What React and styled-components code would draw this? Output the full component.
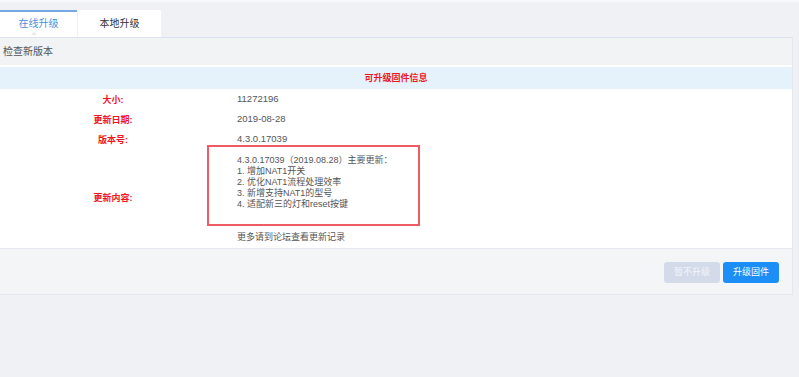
import styled, { createGlobalStyle } from "styled-components";

const GlobalStyle = createGlobalStyle`
  html, body {
    margin: 0;
    padding: 0;
    background: #eff1f4;
    font-family: "Liberation Sans", "Noto Sans CJK SC", sans-serif;
  }
  body {
    border-top: 2px solid #f7f8f9;
  }
`;

const info = [
  { label: "大小:", value: "11272196" },
  { label: "更新日期:", value: "2019-08-28" },
  { label: "版本号:", value: "4.3.0.17039" },
];

const notes = [
  "4.3.0.17039（2019.08.28）主要更新：",
  "1. 增加NAT1开关",
  "2. 优化NAT1流程处理效率",
  "3. 新增支持NAT1的型号",
  "4. 适配新三的灯和reset按键",
];

function App() {
  return (
    <>
      <GlobalStyle />
      <Page>
        <TabBar>
          <Tab active>在线升级</Tab>
          <Tab>本地升级</Tab>
        </TabBar>

        <Panel>
          <PanelHeader>检查新版本</PanelHeader>
          <PanelBody>
            <SectionTitle>可升级固件信息</SectionTitle>
            <InfoGrid>
              {info.map((row) => (
                <InfoRow key={row.label}>
                  <Label>{row.label}</Label>
                  <Value>{row.value}</Value>
                </InfoRow>
              ))}
              <InfoRow tall>
                <Label tall>更新内容:</Label>
                <div>
                  <NotesBox>
                    {notes.map((line) => (
                      <NoteLine key={line}>{line}</NoteLine>
                    ))}
                  </NotesBox>
                  <MoreLink>更多请到论坛查看更新记录</MoreLink>
                </div>
              </InfoRow>
            </InfoGrid>
          </PanelBody>
          <Footer>
            <Button disabled>暂不升级</Button>
            <Button primary>升级固件</Button>
          </Footer>
        </Panel>
      </Page>
    </>
  );
}

export default App;

const Page = styled.div`
  padding-top: 8px;
  padding-right: 6px;
`;

const TabBar = styled.div`
  display: flex;
  gap: 1px;
  height: 27px;
`;

const Tab = styled.div`
  position: relative;
  box-sizing: border-box;
  width: ${(p) => (p.active ? "77px" : "83px")};
  height: 27px;
  background: #fff;
  border-top: 2px solid ${(p) => (p.active ? "#76a9e4" : "#fff")};
  color: ${(p) => (p.active ? "#4b8fd9" : "#333")};
  font-size: 10px;
  line-height: 24px;
  text-align: center;

  &::after {
    content: "";
    display: ${(p) => (p.active ? "block" : "none")};
    position: absolute;
    left: 31px;
    bottom: 2px;
    border-left: 3px solid transparent;
    border-right: 3px solid transparent;
    border-bottom: 3px solid #e6e8ec;
  }
`;

const Panel = styled.div`
  border-top: 1px solid #dbe3f1;
  border-right: 1px solid #e2e7f0;
  border-bottom: 1px solid #e4e8ef;
`;

const PanelHeader = styled.div`
  height: 27px;
  padding-left: 3px;
  background: #f2f3f5;
  color: #555;
  font-size: 10px;
  line-height: 27px;
  border-bottom: 2px solid #fff;
`;

const PanelBody = styled.div`
  background: #fff;
  padding-bottom: 2px;
`;

const SectionTitle = styled.div`
  height: 22px;
  background: #e6f2fb;
  color: #f0141e;
  font-size: 9px;
  font-weight: bold;
  line-height: 22px;
  text-align: center;
`;

const InfoGrid = styled.div`
  display: flex;
  flex-direction: column;
`;

const InfoRow = styled.div`
  display: grid;
  grid-template-columns: 226px 1fr;
  align-items: center;
  min-height: 20px;
  margin-top: ${(p) => (p.tall ? "-4px" : "0")};
`;

const Label = styled.div`
  padding-top: ${(p) => (p.tall ? "4px" : "0")};
  color: #f0141e;
  font-size: 9px;
  font-weight: bold;
  text-align: center;
`;

const Value = styled.div`
  padding-left: 11px;
  color: #555;
  font-size: 9.5px;
  line-height: 20px;
`;

const NotesBox = styled.div`
  box-sizing: border-box;
  width: 213px;
  height: 81px;
  margin-left: -19px;
  padding: 8px 0 0 28px;
  border: 2px solid #ef5b63;
`;

const NoteLine = styled.div`
  color: #555;
  font-size: 9px;
  line-height: 11px;
  white-space: nowrap;
`;

const MoreLink = styled.div`
  padding: 6px 0 3px 11px;
  color: #555;
  font-size: 9px;
  line-height: 11px;
`;

const Footer = styled.div`
  display: flex;
  justify-content: flex-end;
  gap: 3px;
  height: 46px;
  box-sizing: border-box;
  padding: 13px 13px 0 0;
  background: #f4f5f7;
  border-top: 1px solid #e3e8f1;
`;

const Button = styled.button`
  box-sizing: border-box;
  height: 21px;
  padding: 0 10px;
  border: none;
  border-radius: 3px;
  background: ${(p) => (p.primary ? "#1b8ef8" : "#d3dbeb")};
  color: ${(p) => (p.primary ? "#fff" : "#f2f5fa")};
  font-family: "Liberation Sans", "Noto Sans CJK SC", sans-serif;
  font-size: 9px;
  line-height: 21px;
  cursor: ${(p) => (p.disabled ? "not-allowed" : "pointer")};
`;
